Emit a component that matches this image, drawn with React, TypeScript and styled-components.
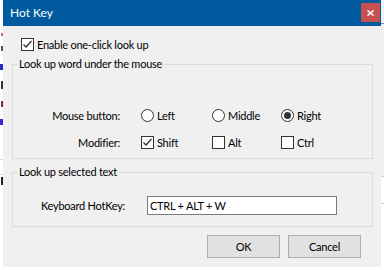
import * as React from "react";
import styled, { createGlobalStyle } from "styled-components";

const GlobalStyle = createGlobalStyle`
  html, body {
    margin: 0;
    padding: 0;
    background: #ffffff;
  }
  body {
    font-family: Lato, "Liberation Sans", sans-serif;
    font-size: 11px;
    letter-spacing: -0.25px;
    color: #000000;
  }
`;

const Screen = styled.div`
  display: flex;
  width: 384px;
  height: 270px;
  overflow: hidden;
`;

// clipped bits of the window behind the dialog
const LeftEdge = styled.div`
  width: 3px;
  flex: none;
  display: flex;
  flex-direction: column;
  padding-top: 29px;
  background: #ffffff;
  overflow: hidden;
`;

const Slot = styled.div<{ $h?: number }>`
  height: ${(p) => p.$h ?? 19}px;
  flex: none;
  display: flex;
  justify-content: flex-end;
  align-items: center;
`;

const Stub = styled.span<{ $color: string; $w?: number; $h?: number }>`
  width: ${(p) => p.$w ?? 2}px;
  height: ${(p) => p.$h ?? 6}px;
  background: ${(p) => p.$color};
`;

const EdgeBox = styled.div`
  height: 14px;
  margin-top: 2px;
  border-top: 1px solid #d9d9d9;
  border-bottom: 1px solid #d9d9d9;
  background: #ffffff;
`;

const RightEdge = styled.div`
  width: 3px;
  flex: none;
  display: flex;
  flex-direction: column;
`;

const EdgeBand = styled.div<{ $h: number; $bg: string; $line?: string }>`
  height: ${(p) => p.$h}px;
  flex: none;
  background: ${(p) => p.$bg};
  border-top: ${(p) => (p.$line ? `1px solid ${p.$line}` : "none")};
`;

const Dialog = styled.div`
  width: 378px;
  height: 267px;
  flex: none;
  display: flex;
  flex-direction: column;
  background: #f0f0f0;
`;

const TitleBar = styled.div`
  height: 26px;
  flex: none;
  display: flex;
  align-items: center;
  justify-content: space-between;
  padding: 0 1px 0 7px;
  background: #005a9e;
  color: #ffffff;
  font-size: 12px;
  letter-spacing: 0;
`;

const TitleText = styled.span`
  margin-top: -1px;
`;

const CloseButton = styled.div`
  width: 19px;
  height: 19px;
  margin-top: -1px;
  display: flex;
  align-items: center;
  justify-content: center;
  background: #c75050;
`;

const Body = styled.div`
  flex: 1;
  display: flex;
  flex-direction: column;
  padding: 12px 8px 0 9px;
`;

const CheckRow = styled.label`
  display: flex;
  align-items: center;
  height: 13px;
  padding-left: 9px;
  gap: 3px;
`;

const Box = styled.span`
  width: 13px;
  height: 13px;
  box-sizing: border-box;
  flex: none;
  border: 1px solid #333333;
  background: #ffffff;
  display: flex;
  align-items: center;
  justify-content: center;
`;

const Round = styled.span<{ $on?: boolean }>`
  width: 13px;
  height: 13px;
  box-sizing: border-box;
  flex: none;
  border: 1px solid #333333;
  border-radius: 50%;
  background: #ffffff;
  display: flex;
  align-items: center;
  justify-content: center;

  &::after {
    content: "";
    display: ${(p) => (p.$on ? "block" : "none")};
    width: 7px;
    height: 7px;
    border-radius: 50%;
    background: #333333;
  }
`;

const Group = styled.fieldset<{ $h: number; $top: number }>`
  box-sizing: border-box;
  height: ${(p) => p.$h}px;
  margin: ${(p) => p.$top}px 0 0 0;
  padding: 0;
  border: 1px solid #dcdcdc;
  min-inline-size: 0;
`;

const Legend = styled.legend`
  margin-left: 4px;
  padding: 0 2px;
  line-height: 16px;
`;

const Rows = styled.div`
  display: flex;
  flex-direction: column;
  gap: 9px;
  padding-top: 34px;
`;

const Row = styled.div`
  display: flex;
  align-items: center;
  height: 18px;
`;

const FieldLabel = styled.span`
  width: 107px;
  margin-right: 21px;
  text-align: right;
`;

const Option = styled.label<{ $w: number }>`
  width: ${(p) => p.$w}px;
  display: flex;
  align-items: center;
  gap: 3px;
`;

const HotKeyRow = styled.div`
  display: flex;
  align-items: center;
  padding: 16px 0 0 28px;
`;

const HotKeyLabel = styled.span`
  width: 106px;
`;

const HotKeyInput = styled.div`
  box-sizing: border-box;
  width: 190px;
  height: 19px;
  border: 1px solid #7a7a7a;
  background: #ffffff;
  padding-left: 2px;
  line-height: 17px;
`;

const Buttons = styled.div`
  display: flex;
  justify-content: flex-end;
  gap: 8px;
  margin-top: 8px;
  padding-right: 12px;
`;

const Button = styled.button`
  box-sizing: border-box;
  width: 73px;
  height: 23px;
  padding: 0;
  border: 1px solid #adadad;
  background: #e1e1e1;
  font: inherit;
  letter-spacing: inherit;
  color: #000000;
`;

const Check = () => (
  <svg width="11" height="11" viewBox="0 0 11 11">
    <path d="M1.5 5.5 L4 8 L9.5 2" fill="none" stroke="#333333" strokeWidth="1.3" />
  </svg>
);

const App = () => {
  return (
    <Screen>
      <GlobalStyle />
      <LeftEdge>
        <Slot $h={10}>
          <Stub $color="#c06a9a" $w={2} $h={3} />
        </Slot>
        <Slot $h={19}>
          <Stub $color="#555555" $w={2} $h={5} />
        </Slot>
        <Slot $h={18}>
          <Stub $color="#2a2ac8" $w={3} $h={6} />
        </Slot>
        <Slot $h={18}>
          <Stub $color="#333333" $w={2} $h={8} />
        </Slot>
        <Slot $h={19}>
          <Stub $color="#7a3030" $w={2} $h={6} />
        </Slot>
        <Slot $h={18}>
          <Stub $color="#3a2ad0" $w={3} $h={6} />
        </Slot>
        <Slot $h={26} />
        <EdgeBox />
        <Slot $h={12}>
          <Stub $color="#222222" $w={2} $h={8} />
        </Slot>
      </LeftEdge>
      <Dialog>
        <TitleBar>
          <TitleText>Hot Key</TitleText>
          <CloseButton>
            <svg width="7" height="6" viewBox="0 0 7 6">
              <path d="M0.5 0.5 L6.5 5.5 M6.5 0.5 L0.5 5.5" stroke="#ffffff" strokeWidth="1.6" />
            </svg>
          </CloseButton>
        </TitleBar>
        <Body>
          <CheckRow>
            <Box>
              <Check />
            </Box>
            Enable one-click look up
          </CheckRow>
          <Group $h={103} $top={5}>
            <Legend>Look up word under the mouse</Legend>
            <Rows>
              <Row>
                <FieldLabel>Mouse button:</FieldLabel>
                <Option $w={71}>
                  <Round />
                  Left
                </Option>
                <Option $w={69}>
                  <Round />
                  Middle
                </Option>
                <Option $w={70}>
                  <Round $on />
                  Right
                </Option>
              </Row>
              <Row>
                <FieldLabel>Modifier:</FieldLabel>
                <Option $w={71}>
                  <Box>
                    <Check />
                  </Box>
                  Shift
                </Option>
                <Option $w={69}>
                  <Box />
                  Alt
                </Option>
                <Option $w={70}>
                  <Box />
                  Ctrl
                </Option>
              </Row>
            </Rows>
          </Group>
          <Group $h={63} $top={5}>
            <Legend>Look up selected text</Legend>
            <HotKeyRow>
              <HotKeyLabel>Keyboard HotKey:</HotKeyLabel>
              <HotKeyInput>CTRL + ALT + W</HotKeyInput>
            </HotKeyRow>
          </Group>
          <Buttons>
            <Button>OK</Button>
            <Button>Cancel</Button>
          </Buttons>
        </Body>
      </Dialog>
      <RightEdge>
        <EdgeBand $h={23} $bg="#f0f0f0" />
        <EdgeBand $h={152} $bg="#f0f0f0" $line="#8a8a8a" />
        <EdgeBand $h={26} $bg="#ffffff" $line="#d0d0d0" />
        <EdgeBand $h={68} $bg="#ffffff" $line="#d0d0d0" />
      </RightEdge>
    </Screen>
  );
};

export default App;
